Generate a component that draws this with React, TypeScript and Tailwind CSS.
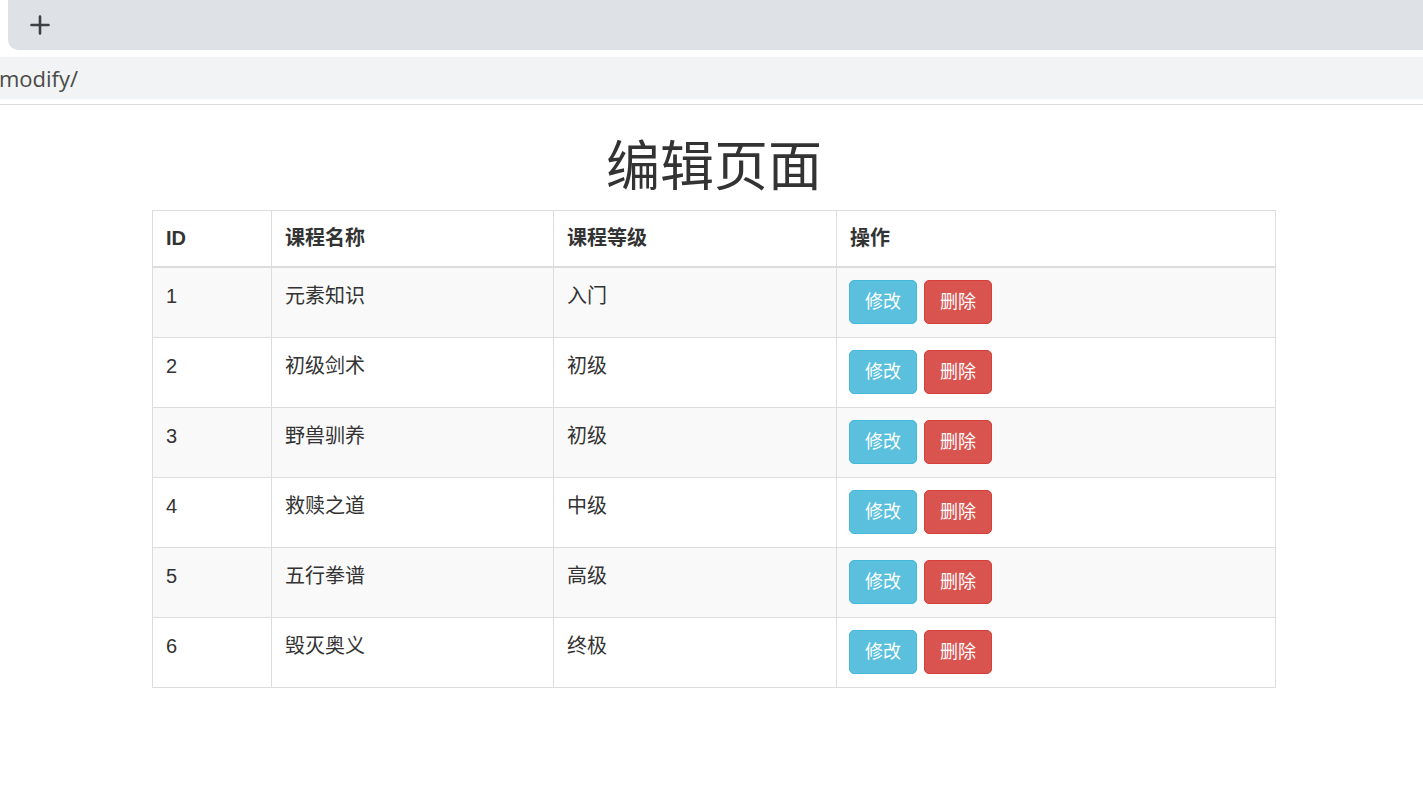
import React from "react";

const rows = [
  { id: 1, name: "元素知识", level: "入门" },
  { id: 2, name: "初级剑术", level: "初级" },
  { id: 3, name: "野兽驯养", level: "初级" },
  { id: 4, name: "救赎之道", level: "中级" },
  { id: 5, name: "五行拳谱", level: "高级" },
  { id: 6, name: "毁灭奥义", level: "终极" },
];

const font = "font-['Liberation_Sans','Noto_Sans_CJK_SC',sans-serif]";

export default function App() {
  return (
    <div className={`w-[1423px] h-[789px] bg-white overflow-hidden ${font} text-[#333]`}>
      {/* tab strip */}
      <div className="flex h-[50px]">
        <div className="w-[8px] bg-white" />
        <div className="flex-1 bg-[#dee1e6] rounded-bl-[10px] flex items-center">
          <svg className="ml-[14px]" width="36" height="36" viewBox="0 0 36 36">
            <path d="M18 9.5 V26.5 M9.5 18 H26.5" stroke="#3c4043" strokeWidth="2.6" strokeLinecap="round" />
          </svg>
        </div>
      </div>
      <div className="h-[7px] bg-white" />
      {/* address bar */}
      <div className="h-[42px] bg-[#f1f3f4] flex items-center">
        <span className="text-[22px] text-[#4a4a4a] leading-none font-['Open_Sans','Noto_Sans',sans-serif] -ml-[1px]">
          modify/
        </span>
      </div>
      <div className="h-[5px] bg-white" />
      <div className="h-px bg-[#dadce0]" />

      {/* page */}
      <h1 className="text-center pl-[5px] text-[54px] font-normal leading-[64px] mt-[26px] mb-[16px] text-[#333] font-['Noto_Sans_CJK_SC','Liberation_Sans',sans-serif]">
        编辑页面
      </h1>
      <div className="px-[152px] -mt-[1px]">
        <table className="w-[1124px] border-collapse border border-[#ddd] text-[20px] table-fixed">
          <colgroup>
            <col className="w-[119px]" />
            <col className="w-[282px]" />
            <col className="w-[283px]" />
            <col />
          </colgroup>
          <thead>
            <tr>
              {["ID", "课程名称", "课程等级", "操作"].map((h) => (
                <th
                  key={h}
                  className="text-left font-bold border border-[#ddd] border-b-2 h-[56px] px-[13px] pt-0 pb-0 leading-[26px] align-middle"
                >
                  {h}
                </th>
              ))}
            </tr>
          </thead>
          <tbody>
            {rows.map((r, i) => (
              <tr key={r.id} className={i % 2 === 0 ? "bg-[#f9f9f9]" : "bg-white"}>
                <td className="border border-[#ddd] px-[13px] pt-[15px] pb-[10px] align-top leading-[26px]">
                  {r.id}
                </td>
                <td className="border border-[#ddd] px-[13px] pt-[15px] pb-[10px] align-top leading-[26px]">
                  {r.name}
                </td>
                <td className="border border-[#ddd] px-[13px] pt-[15px] pb-[10px] align-top leading-[26px]">
                  {r.level}
                </td>
                <td className="border border-[#ddd] px-[12px] pt-[12px] pb-[13px] align-top">
                  <div className="flex gap-[7px]">
                    <button className="h-[44px] w-[68px] rounded-[5px] bg-[#5bc0de] border border-[#46b8da] text-white text-[18px] leading-[26px]">
                      修改
                    </button>
                    <button className="h-[44px] w-[68px] rounded-[5px] bg-[#d9534f] border border-[#d43f3a] text-white text-[18px] leading-[26px]">
                      删除
                    </button>
                  </div>
                </td>
              </tr>
            ))}
          </tbody>
        </table>
      </div>
    </div>
  );
}
